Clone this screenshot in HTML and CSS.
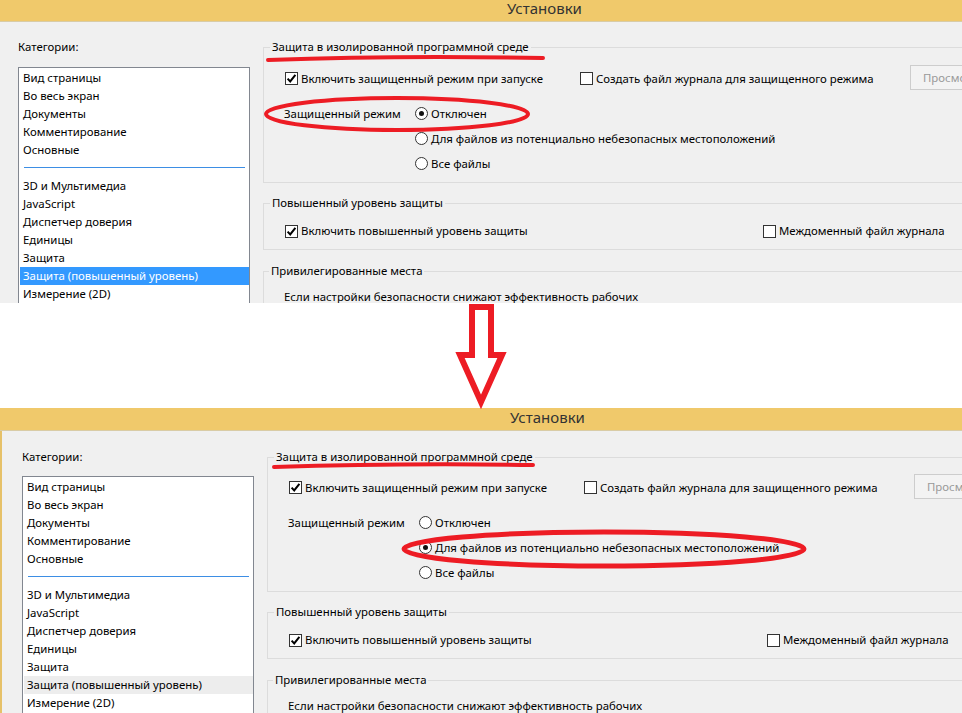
FILE: index.html
```html
<!DOCTYPE html>
<html lang="ru">
<head>
<meta charset="utf-8">
<title>Установки</title>
<link rel="stylesheet" href="styles.css">
</head>
<body>
<section class="shot shot-a">
  <div class="titlebar"><span class="title">Установки</span></div>
  <div class="dlg-body">
    <div class="cats">
      <div class="cats-label">Категории:</div>
      <ul class="list">
        <li>Вид страницы</li>
        <li>Во весь экран</li>
        <li>Документы</li>
        <li>Комментирование</li>
        <li>Основные</li>
        <li class="sep"></li>
        <li>3D и Мультимедиа</li>
        <li>JavaScript</li>
        <li>Диспетчер доверия</li>
        <li>Единицы</li>
        <li>Защита</li>
        <li class="sel">Защита (повышенный уровень)</li>
        <li>Измерение (2D)</li>
      </ul>
    </div>
    <div class="panel">
      <fieldset class="group g-sandbox">
        <legend>Защита в изолированной программной среде</legend>
        <div class="row row-top">
          <label class="cb"><span class="box on"><svg viewBox="0 0 13 13"><path d="M2.6 6.6 L5.2 9.4 L10.4 2.8"/></svg></span>Включить защищенный режим при запуске</label>
          <label class="cb"><span class="box"></span>Создать файл журнала для защищенного режима</label>
          <span class="btn">Просмотр</span>
        </div>
        <div class="mode">
          <span class="mode-label">Защищенный режим</span>
          <div class="radios">
            <label class="rb"><span class="ring on"></span>Отключен</label>
            <label class="rb"><span class="ring"></span>Для файлов из потенциально небезопасных местоположений</label>
            <label class="rb"><span class="ring"></span>Все файлы</label>
          </div>
        </div>
      </fieldset>
      <fieldset class="group g-enh">
        <legend>Повышенный уровень защиты</legend>
        <div class="row row-enh">
          <label class="cb"><span class="box on"><svg viewBox="0 0 13 13"><path d="M2.6 6.6 L5.2 9.4 L10.4 2.8"/></svg></span>Включить повышенный уровень защиты</label>
          <label class="cb"><span class="box"></span>Междоменный файл журнала</label>
        </div>
      </fieldset>
      <fieldset class="group g-priv">
        <legend>Привилегированные места</legend>
        <p class="note">Если настройки безопасности снижают эффективность рабочих</p>
      </fieldset>
    </div>
  </div>
  <svg class="marks" width="962" height="303" viewBox="0 0 962 303">
    <path class="red" d="M268 60 Q 400 55 543 58" stroke-width="4"/>
    <ellipse class="red" cx="397" cy="114" rx="131" ry="16" stroke-width="4"/>
  </svg>
</section>

<div class="arrow-gap">
  <svg width="962" height="105" viewBox="0 0 962 105">
    <polygon class="red" points="472,4 491,4 491,52 502,52 481,99 460,52 472,52" stroke-width="6"/>
  </svg>
</div>

<section class="shot shot-b">
  <div class="titlebar"><span class="title">Установки</span></div>
  <div class="dlg-body">
    <div class="cats">
      <div class="cats-label">Категории:</div>
      <ul class="list">
        <li>Вид страницы</li>
        <li>Во весь экран</li>
        <li>Документы</li>
        <li>Комментирование</li>
        <li>Основные</li>
        <li class="sep"></li>
        <li>3D и Мультимедиа</li>
        <li>JavaScript</li>
        <li>Диспетчер доверия</li>
        <li>Единицы</li>
        <li>Защита</li>
        <li class="sel-off">Защита (повышенный уровень)</li>
        <li>Измерение (2D)</li>
      </ul>
    </div>
    <div class="panel">
      <fieldset class="group g-sandbox">
        <legend>Защита в изолированной программной среде</legend>
        <div class="row row-top">
          <label class="cb"><span class="box on"><svg viewBox="0 0 13 13"><path d="M2.6 6.6 L5.2 9.4 L10.4 2.8"/></svg></span>Включить защищенный режим при запуске</label>
          <label class="cb"><span class="box"></span>Создать файл журнала для защищенного режима</label>
          <span class="btn">Просмотр</span>
        </div>
        <div class="mode">
          <span class="mode-label">Защищенный режим</span>
          <div class="radios">
            <label class="rb"><span class="ring"></span>Отключен</label>
            <label class="rb"><span class="ring on"></span>Для файлов из потенциально небезопасных местоположений</label>
            <label class="rb"><span class="ring"></span>Все файлы</label>
          </div>
        </div>
      </fieldset>
      <fieldset class="group g-enh">
        <legend>Повышенный уровень защиты</legend>
        <div class="row row-enh">
          <label class="cb"><span class="box on"><svg viewBox="0 0 13 13"><path d="M2.6 6.6 L5.2 9.4 L10.4 2.8"/></svg></span>Включить повышенный уровень защиты</label>
          <label class="cb"><span class="box"></span>Междоменный файл журнала</label>
        </div>
      </fieldset>
      <fieldset class="group g-priv">
        <legend>Привилегированные места</legend>
        <p class="note">Если настройки безопасности снижают эффективность рабочих</p>
      </fieldset>
    </div>
  </div>
  <svg class="marks" width="962" height="305" viewBox="0 0 962 305">
    <path class="red" d="M274 59 Q 400 55 533 57" stroke-width="4"/>
    <ellipse class="red" cx="604" cy="141" rx="200" ry="17" stroke-width="5"/>
  </svg>
</section>
</body>
</html>
```

FILE: styles.css
```css
* { box-sizing: border-box; }

html, body {
  margin: 0;
  padding: 0;
  background: #ffffff;
}

body {
  width: 962px;
  height: 713px;
  overflow: hidden;
  font-family: "Noto Sans", "DejaVu Sans", sans-serif;
  font-size: 11.4px;
  color: #000;
}

.shot {
  position: relative;
  background: #f0f0f0;
  overflow: hidden;
}

.shot-a { height: 303px; }

.shot-b {
  height: 305px;
  box-shadow: inset 2px 0 0 #e6c169;
}

.titlebar {
  height: 22px;
  background: #f0c96b;
  border-bottom: 1px solid #d9cca6;
  padding-left: 507px;
  font-size: 15px;
  line-height: 16px;
  color: #333;
}

.shot-a .titlebar {
  height: 22px;
}

.shot-b .titlebar {
  height: 23px;
  padding-top: 1px;
  padding-left: 510px;
}

.title { display: inline-block; }

.dlg-body {
  display: flex;
  gap: 13px;
  padding: 17px 0 0 18px;
}

.shot-a .list { margin-top: 12px; }

.shot-b .dlg-body {
  padding: 18px 0 0 22px;
}

.cats { width: 232px; flex: none; }

.cats-label {
  line-height: 16px;
  height: 16px;
}

.list {
  list-style: none;
  margin: 11px 0 0;
  padding: 1px 0;
  height: 260px;
  background: #fff;
  border: 1px solid #828790;
}

.list li {
  height: 18px;
  line-height: 18px;
  padding-left: 4px;
  white-space: nowrap;
}

.list li.sep {
  position: relative;
}

.list li.sep::after {
  content: "";
  position: absolute;
  left: 5px;
  right: 4px;
  top: 8px;
  height: 1px;
  background: #3d8ee4;
}

.list li.sel {
  background: #3399ff;
  color: #fff;
  margin-left: 1px;
  padding-left: 3px;
}

.list li.sel-off {
  background: #ededed;
  margin-left: 1px;
  padding-left: 3px;
}

.panel {
  flex: none;
  width: 760px;
}

.group {
  margin: 0;
  padding: 0 0 0 21px;
  border: 1px solid #dcdcdc;
  min-width: 0;
}

.group legend {
  margin-left: -15px;
  padding: 0 2px;
  line-height: 16px;
  height: 16px;
}

.g-sandbox { padding-top: 12px; padding-bottom: 6px; }
.g-enh { margin-top: 12px; padding-top: 11px; padding-bottom: 9px; }
.g-priv { margin-top: 13px; padding-top: 9px; padding-left: 20px; height: 60px; }

.shot-b .g-sandbox { padding-top: 11px; }
.shot-b .mode { margin-top: 16px; }

.row {
  display: grid;
  height: 18px;
  align-items: center;
}

.row-top { grid-template-columns: 295px 330px auto; }
.row-enh { grid-template-columns: 478px auto; }

.cb, .rb {
  display: flex;
  align-items: center;
  white-space: nowrap;
  line-height: 18px;
}

.box {
  flex: none;
  width: 13px;
  height: 13px;
  border: 1px solid #333;
  background: #fff;
  margin-right: 3px;
  position: relative;
}

.box svg {
  position: absolute;
  left: -1px;
  top: -1px;
  width: 13px;
  height: 13px;
}

.box svg path {
  fill: none;
  stroke: #000;
  stroke-width: 2;
}

.btn {
  align-self: start;
  margin-top: -2px;
  width: 90px;
  height: 25px;
  line-height: 23px;
  padding-left: 12px;
  border: 1px solid #cdcdcd;
  background: #f3f3f3;
  color: #9a9a9a;
  white-space: nowrap;
}

.mode {
  display: grid;
  grid-template-columns: 131px auto;
  margin-top: 16px;
  margin-left: -1px;
}

.mode-label {
  line-height: 25px;
  white-space: nowrap;
}

.radios {
  display: flex;
  flex-direction: column;
}

.rb { height: 25px; }

.ring {
  flex: none;
  width: 13px;
  height: 13px;
  border: 1px solid #333;
  border-radius: 50%;
  background: #fff;
  margin-right: 3px;
  position: relative;
}

.ring.on::after {
  content: "";
  position: absolute;
  left: 3px;
  top: 3px;
  width: 5px;
  height: 5px;
  border-radius: 50%;
  background: #111;
}

.note {
  margin: 0;
  line-height: 18px;
  white-space: nowrap;
}

.marks {
  position: absolute;
  left: 0;
  top: 0;
  pointer-events: none;
}

.red {
  fill: none;
  stroke: #ed1c24;
  stroke-linecap: round;
}

.arrow-gap {
  height: 105px;
  background: #fff;
  position: relative;
  z-index: 1;
}

.arrow-gap svg { display: block; overflow: visible; }

.arrow-gap polygon { stroke-linejoin: miter; }
```
